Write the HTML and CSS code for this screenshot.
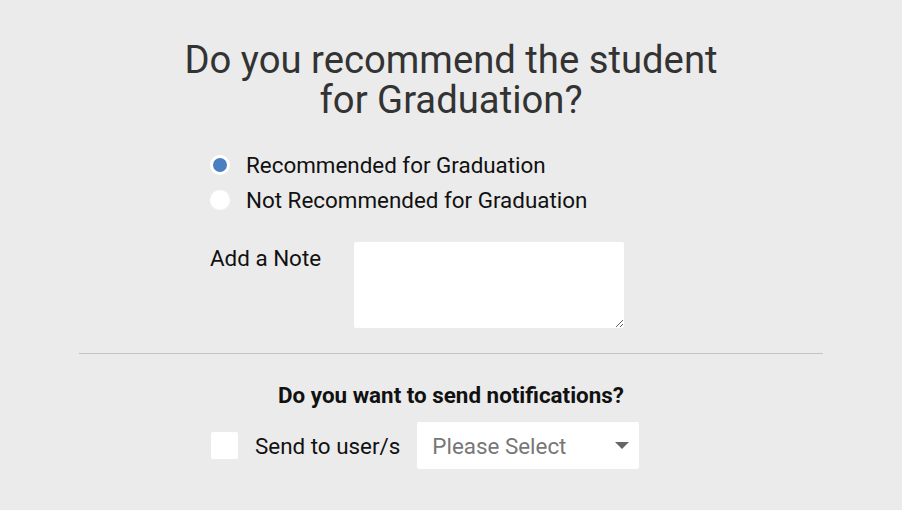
FILE: index.html
```
<!DOCTYPE html>
<html lang="en">

<head>
    <meta charset="UTF-8">
    <meta name="viewport" content="width=device-width, initial-scale=1.0">
    <link rel="stylesheet" href="styles.css">
</head>

<body>
    <div class="recommend">
        <h1 class="title">Do you recommend the student<br>for Graduation?</h1>

        <div class="options">
            <label class="option">
                <input type="radio" name="grad" value="yes" checked>
                <span>Recommended for Graduation</span>
            </label>
            <label class="option">
                <input type="radio" name="grad" value="no">
                <span>Not Recommended for Graduation</span>
            </label>
        </div>

        <div class="note">
            <label for="note" class="note-label">Add a Note</label>
            <textarea id="note" name="note"></textarea>
        </div>

        <hr class="divider">

        <h2 class="notify-title">Do you want to send notifications?</h2>
        <div class="notify">
            <input type="checkbox" id="send" class="check">
            <label for="send" class="notify-label">Send to user/s</label>
            <div class="select-wrap">
                <select name="users">
                    <option value="">Please Select</option>
                </select>
            </div>
        </div>
    </div>
</body>
</html>
```

FILE: styles.css
```
body {
    margin: 0;
    background-color: #ebebeb;
    font-family: Roboto, "Liberation Sans", sans-serif;
    color: #111;
}
.recommend {
    width: 744px;
    margin: 0 auto;
    padding-top: 40px;
}
.title {
    margin: 0;
    font-size: 38.25px;
    line-height: 40px;
    font-weight: 400;
    color: #333;
    text-align: center;
}
.options {
    margin-top: 27px;
    padding-left: 131px;
}
.option {
    display: flex;
    align-items: center;
    height: 35px;
    font-size: 22.4px;
}
.option input {
    appearance: none;
    width: 20px;
    height: 20px;
    margin: 0 16px 0 0;
    border-radius: 50%;
    background-color: #fff;
    border: 3px solid #fff;
}
.option input:checked {
    background-color: #4a7fc1;
}
.note {
    display: flex;
    margin-top: 25px;
    padding-left: 131px;
}
.note-label {
    width: 144px;
    font-size: 22.4px;
    padding-top: 3px;
}
.note textarea {
    width: 270px;
    height: 86px;
    border: none;
    border-radius: 2px;
    background-color: #fff;
    padding: 6px;
    box-sizing: border-box;
    font-family: inherit;
    font-size: 16px;
}
.divider {
    margin: 25px 0 0 0;
    border: none;
    border-top: 1px solid #c4c4c4;
}
.notify-title {
    margin: 28px 0 0 0;
    font-size: 22.4px;
    font-weight: 700;
    text-align: center;
}
.notify {
    display: flex;
    align-items: center;
    margin-top: 14px;
    padding-left: 132px;
}
.check {
    appearance: none;
    width: 27px;
    height: 27px;
    margin: 0 17px 0 0;
    background-color: #fff;
    border-radius: 2px;
}
.notify-label {
    font-size: 22.4px;
    margin-right: 17px;
}
.select-wrap {
    position: relative;
}
.select-wrap select {
    appearance: none;
    width: 222px;
    height: 47px;
    border: none;
    border-radius: 2px;
    background-color: #fff;
    padding: 0 15px;
    font-family: inherit;
    font-size: 22.4px;
    color: #777;
}
.select-wrap::after {
    content: "";
    position: absolute;
    right: 10px;
    top: 20px;
    border-left: 7px solid transparent;
    border-right: 7px solid transparent;
    border-top: 7px solid #666;
    pointer-events: none;
}
```
